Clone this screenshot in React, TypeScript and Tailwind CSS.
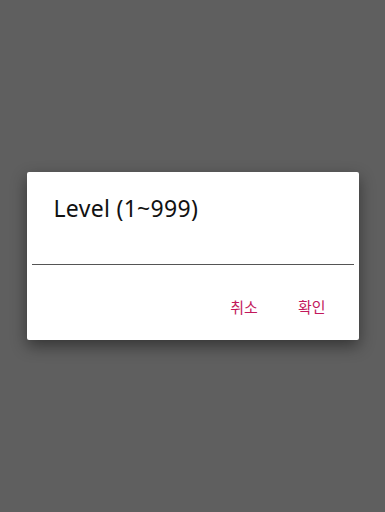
export default function App() {
  return (
    <div
      className="flex h-screen w-full items-center justify-center bg-[#5f5f5f]"
      style={{ fontFamily: 'Roboto, "Noto Sans CJK KR", sans-serif' }}
    >
      {/* Dialog */}
      <div className="flex h-[168px] w-[332px] flex-col rounded-[2px] bg-white shadow-[0_6px_16px_rgba(0,0,0,0.45)]">
        <div
          className="pl-[27px] pt-[21px] text-[23px] leading-[30px] tracking-[0.3px] text-[#111]"
          style={{ fontFamily: '"Noto Sans", sans-serif' }}
        >
          Level (1~999)
        </div>

        {/* Input underline */}
        <div className="mx-[5px] mt-[41px] h-px bg-[#555]" />

        {/* Actions */}
        <div className="mt-[33px] flex justify-end gap-[40px] pr-[33px]">
          <button className="text-[15px] leading-[20px] text-[#c2185b]">취소</button>
          <button className="text-[15px] leading-[20px] text-[#c2185b]">확인</button>
        </div>
      </div>
    </div>
  );
}
